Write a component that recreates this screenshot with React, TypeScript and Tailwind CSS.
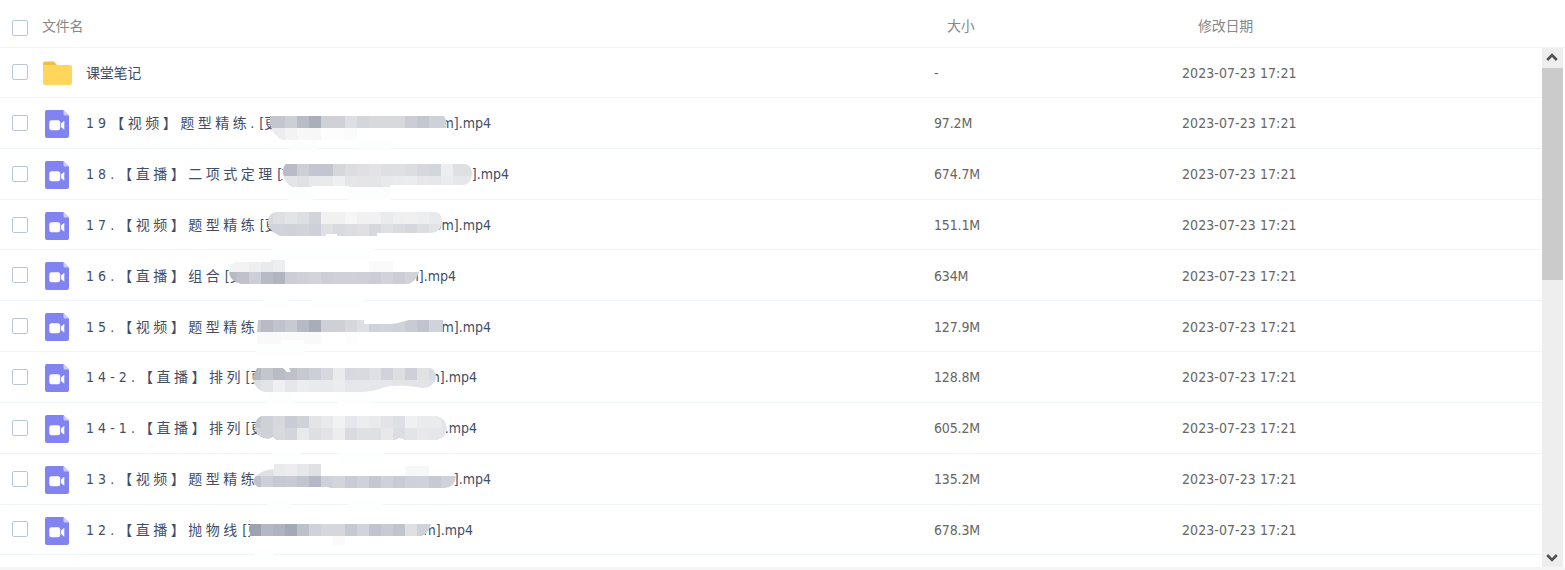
import React from 'react';

type Band = { x: number; y: number; colors: string };
type Mosaic = { clip: string; bands: Band[]; faint?: [number, number, number, number, string][] };
type FileRow = {
  index: string;
  name: string;
  extra: string;
  tail: string;
  width: string;
  size: string;
  top: number;
  height: string;
  textOffset?: string;
  boxOffset?: string;
  mosaic: Mosaic;
};

const DATE = '2023-07-23 17:21';

const files: FileRow[] = [
  {
    index: '19', name: '【视频】题型精练.', extra: '[更', tail: 'm].mp4', width: 'w-[405px]', size: '97.2M', top: 98, height: 'h-[51px]',
    mosaic: {
      clip: 'M270 116H444Q448 121 446 128H357V140H283Q273 136 270 124Z',
      bands: [
        { x: 261, y: 116, colors: 'c3c6cf c3c6cf cccfd6 b7bcc8 a9aebb d0d1d6 d0d1d6 dce0e4 d2d6dd d8d9dd d8d9dd d8d9dd cacdd4 c3c7d0 ced1d8 cfd2d9 ced1d8' },
        { x: 261, y: 128, colors: 'ececee ececee f3f3f4 f7f7f7 f7f7f7 fdfdfd fdfdfd fafbfb' },
      ],
      faint: [[292, 141, 25, 10, 'fcfdfd'], [359, 140, 32, 11, 'fcfdfd']],
    },
  },
  {
    index: '18.', name: '【直播】二项式定理', extra: '[', tail: '].mp4', width: 'w-[423px]', size: '674.7M', top: 149, height: 'h-[51px]',
    mosaic: {
      clip: 'M286 164H466Q472 166 472 174Q472 183 464 185H390V187H349V186H312V187H292Q283 182 283 172Q283 166 286 164Z',
      bands: [
        { x: 273, y: 164, colors: 'b8bcc7 b8bcc7 cccfd6 c3c6d0 c3c6d0 d6d7dc dddde1 e0dfe3 e3e2e6 dedfe3 dfe0e3 dbdde1 d5d8dd d3d6dc eeeef0 dfe0e4 dfe0e4' },
        { x: 273, y: 176, colors: 'e4e5e8 e4e5e8 e0e1e4 e8e9eb e9eaec eeeff0 e6e6e9 e5e5e8 e5e5e8 e8e9ea eaebed ebecee e8e8eb e6e7ea eaebed e6e7ea e6e7ea' },
      ],
      faint: [[288, 187, 25, 13, 'fcfdfd'], [347, 187, 44, 13, 'fcfdfd'], [281, 179, 2, 1, '8b93a3'], [282, 169, 1, 1, '8b93a3']],
    },
  },
  {
    index: '17.', name: '【视频】题型精练', extra: '[更', tail: 'om].mp4', width: 'w-[405px]', size: '151.1M', top: 200, height: 'h-[50px]',
    mosaic: {
      clip: 'M275 212H436Q442 213 442 221Q442 232 431 233H377V236H337V234H326V236H280Q268 231 268 222Q268 214 275 212Z',
      bands: [
        { x: 261, y: 212, colors: 'd8dae0 dddfe3 e3e4e7 dce0e4 d3d4da f1f1f2 f1f1f2 f5f6f8 f1f1f2 f1f1f3 eaebec eeeff0 f0f0f1 edeeef e9eaed e9eaed' },
        { x: 261, y: 224, colors: 'd0d3db d0d3da cfd2d9 d2d4da cdd0d8 dfe0e4 d8dadf dcdde1 e0e0e4 d6d8de dfe0e4 d9dbe0 d5d7dd dcdde1 e2e3e6 e2e3e6' },
      ],
      faint: [[272, 248, 102, 12, 'fdfefe']],
    },
  },
  {
    index: '16.', name: '【直播】组合', extra: '[更', tail: 'm].mp4', width: 'w-[370px]', size: '634M', top: 250, height: 'h-[51px]', textOffset: 'pt-0.5',
    mosaic: {
      clip: 'M237 262H271V260H285V272H419Q416 282 408 284H241Q229 281 229 271Q229 263 237 262Z',
      bands: [
        { x: 225, y: 260, colors: 'f3f3f4 f3f3f4 eeeff0 e9eaec edeef0' },
        { x: 225, y: 272, colors: 'b7bbc5 bfc2cb cccfd7 b7bbc6 b1b5c0 ccced5 cfd1d9 d2d4da cccfd6 cfd1d8 cfd1d8 cdd0d7 cacdd5 d0d3d9 cbced6 d0d3da d0d3da' },
      ],
      faint: [[369, 261, 24, 11, 'fafafa'], [263, 296, 26, 12, 'fdfefe'], [312, 296, 52, 12, 'fdfefe']],
    },
  },
  {
    index: '15.', name: '【视频】题型精练', extra: '', tail: 'm].mp4', width: 'w-[405px]', size: '127.9M', top: 301, height: 'h-[51px]', textOffset: 'pt-0.5',
    mosaic: {
      clip: 'M258 320H364V324H390Q400 323 409 320H443V332H257Z',
      bands: [
        { x: 249, y: 320, colors: 'c3c7d0 b8bbc5 bfc3cd c8cad1 b6bac5 a8adb9 ced0d7 ced0d7 d5d7dd dcdfe3 cfd2d9 d2d4da cfd2d9 c8cbd4 c0c4ce d0d3da ccced6' },
      ],
      faint: [[257, 332, 24, 12, 'f9f9fa'], [281, 332, 24, 8, 'fafafa'], [304, 332, 17, 12, 'f9f9fa'], [345, 332, 12, 12, 'fdfdfd'], [256, 344, 49, 12, 'fdfefe']],
    },
  },
  {
    index: '14-2.', name: '【直播】排列', extra: '[更', tail: 'm].mp4', width: 'w-[391px]', size: '128.8M', top: 352, height: 'h-[51px]',
    mosaic: {
      clip: 'M257 368H283L287 372H291L289 368H431Q436 370 436 378Q433 388 422 388Q396 383 382 388Q373 392 360 392H264Q253 388 253 376Z',
      bands: [
        { x: 249, y: 368, colors: 'b5b8c3 c3c6cf b9bcc7 bcc0ca c6c9d1 cdcfd6 d6d8dd eaebed d7d9df d8dae0 dfe0e4 d1d3db dcdee2 cdd0d8 e0e1e5 dadce1' },
        { x: 249, y: 380, colors: 'dcdee2 e3e4e7 efeff1 e6e7ea ecedef e9eaec e8e9eb ebecee e6e7ea e6e7ea e6e7ea e6e7ea e3e4e7 e3e4e7 e3e4e7 e0e1e5' },
      ],
      faint: [[268, 392, 25, 12, 'fdfefe'], [338, 392, 32, 12, 'fdfefe']],
    },
  },
  {
    index: '14-1.', name: '【直播】排列', extra: '[更', tail: '.mp4', width: 'w-[391px]', size: '605.2M', top: 403, height: 'h-[51px]',
    mosaic: {
      clip: 'M261 416H437Q447 419 447 429Q446 437 438 440H405Q402 438 399 438L395 440H276L273 437Q270 440 263 438Q255 435 255 426Q255 419 261 416Z',
      bands: [
        { x: 249, y: 416, colors: 'c5c8d0 cfd1d8 d7d8dd c9ccd7 d0d2d9 e4e4e8 e9eaec f1f2f3 e6e7ea ebedee e9eaec e4e4e8 dee0e4 f0f0f2 eaebed eaebed e4e5e8' },
        { x: 249, y: 428, colors: 'd2d4da cfd1d8 d7dadd d3d5db e9eaec dedfe3 e3e3e7 ededef d9dbe0 dfe0e4 dfe0e4 e8e8eb dcdde2 e3e4e7 e8e8eb e6e7ea e4e5e8' },
      ],
      faint: [[274, 451, 25, 12, 'fdfefe'], [339, 451, 43, 12, 'fdfefe']],
    },
  },
  {
    index: '13.', name: '【视频】题型精练', extra: '', tail: '].mp4', width: 'w-[405px]', size: '135.2M', top: 454, height: 'h-[51px]',
    mosaic: {
      clip: 'M274 464H321V476H456Q455 487 445 488H331L327 487H258Q250 482 256 476Q262 470 274 469Z',
      bands: [
        { x: 249, y: 464, colors: 'dfe0e4 dfe0e4 e9eaec ededef e5e7ea dfe1e4' },
        { x: 249, y: 476, colors: 'bfc2cb ced0d7 c5c9d1 c8cbd3 c1c6cd b4b9c5 ced1d8 d3d5da c9ccd4 d0d2d9 c4c8d1 cfd2d9 c7cbd4 cfd1d8 d0d2da c6cad3 d0d2d9 d0d2d9' },
      ],
      faint: [[405, 466, 24, 10, 'f6f7f7'], [267, 500, 24, 11, 'fdfefe'], [348, 500, 34, 11, 'fdfefe']],
    },
  },
  {
    index: '12.', name: '【直播】抛物线', extra: '[更', tail: 'm].mp4', width: 'w-[387px]', size: '678.3M', top: 505, height: 'h-[50px]', boxOffset: 'pb-0.5',
    mosaic: {
      clip: 'M250 524H431Q429 533 422 536H250Z',
      bands: [
        { x: 249, y: 524, colors: '9da2b0 b4b8c4 afb3c0 a4a9b8 bdc1cc ced2da d6d7dc d6d7dc c5c9d1 d1d4da bfc3cd c8cbd3 c0c5cc dfe0e4 cfd2d9 cfd2d9' },
      ],
      faint: [[250, 520, 14, 4, 'ffffff'], [250, 536, 14, 3, 'ffffff'], [333, 536, 12, 9, 'fafafa'], [254, 549, 20, 10, 'fdfefe']],
    },
  },
];

function Checkbox() {
  return <span className="block h-4 w-4 shrink-0 rounded-[2px] border border-[#b9c6d6] bg-white" />;
}

function FolderIcon() {
  return (
    <svg width="30" height="26" viewBox="0 0 30 26">
      <path d="M1 3Q1 1.500 3 1.500H12L14.500 4.500V9H1Z" fill="#eec04b" />
      <path d="M1 5H28Q30 5 30 7V23Q30 25 28 25H3Q1 25 1 23Z" fill="#ffd65c" />
    </svg>
  );
}

function VideoIcon() {
  return (
    <svg width="24" height="28" viewBox="0 0 24 28">
      <path d="M2 0H18.500L24 5.500V26Q24 28 22 28H2Q0 28 0 26V2Q0 0 2 0Z" fill="#8183f1" />
      <path d="M18.500 0L24 5.500H20Q18.500 5.500 18.500 4Z" fill="#cbccfb" />
      <rect x="4.300" y="10.300" width="10.900" height="9.900" rx="2.200" fill="#fff" />
      <path d="M19.300 10.800V19.700L16 17V13.500Z" fill="#fff" />
    </svg>
  );
}

function MosaicStrip({ mosaic, top }: { mosaic: Mosaic; top: number }) {
  const id = `strip-${top}`;
  return (
    <svg
      className="pointer-events-none absolute left-[220px] top-0 overflow-visible"
      width="300"
      height="51"
      viewBox={`220 ${top} 300 51`}
      aria-hidden="true"
    >
      <clipPath id={id}>
        <path d={mosaic.clip} />
      </clipPath>
      {mosaic.faint?.map(([x, y, w, h, c], i) => (
        <rect key={i} x={x} y={y} width={w} height={h} fill={`#${c}`} />
      ))}
      <g clipPath={`url(#${id})`} shapeRendering="crispEdges">
        {mosaic.bands.map((band) =>
          band.colors.split(' ').map((c, i) => (
            <rect key={`${band.y}-${i}`} x={band.x + i * 12} y={band.y} width="12" height="12" fill={`#${c}`} />
          )),
        )}
      </g>
    </svg>
  );
}

function Cells({ size, offset = '' }: { size: string; offset?: string }) {
  return (
    <>
      <div className={`w-[248px] shrink-0 tracking-[-0.15px] text-[#666] ${offset}`}>{size}</div>
      <div className={`tracking-[0.07px] text-[#666] ${offset}`}>{DATE}</div>
    </>
  );
}

export default function App() {
  return (
    <div className="flex h-[570px] w-[1565px] flex-col overflow-hidden bg-white font-['DejaVu_Sans_Condensed','Noto_Sans','Noto_Sans_CJK_SC',sans-serif] text-[14px] leading-[20px] text-[#424e67]">
      <header className="flex h-12 shrink-0 items-start border-b border-[#f2f4f6] pl-3 pt-4 tracking-[-0.25px] text-[#888]">
        <div className="pt-1">
          <Checkbox />
        </div>
        <div className="ml-[14px] w-[905px]">文件名</div>
        <div className="w-[251px]">大小</div>
        <div>修改日期</div>
      </header>
      <div className="flex h-[519px] shrink-0">
        <main className="w-[1542px] shrink-0 overflow-hidden">
          <div className="flex h-[50px] items-center border-b border-[#f2f6fa] pl-3">
            <div className="pb-0.5">
              <Checkbox />
            </div>
            <div className="ml-[14px] w-11 shrink-0">
              <FolderIcon />
            </div>
            <div className="w-[848px] shrink-0 tracking-[-0.25px]">课堂笔记</div>
            <Cells size="-" />
          </div>
          {files.map((file) => (
            <div key={file.index} className={`relative flex items-center border-b border-[#f0f5fb] pl-3 ${file.height}`}>
              <div className={file.boxOffset}>
                <Checkbox />
              </div>
              <div className="ml-[17px] w-[41px] shrink-0 pt-0.5">
                <VideoIcon />
              </div>
              <div className={`w-[848px] shrink-0 ${file.textOffset ?? ''}`}>
                <div className={`flex justify-between whitespace-nowrap ${file.width}`}>
                  <span>
                    <span className="tracking-[4.1px]">{file.index}</span>
                    <span className="tracking-[3.5px]">{file.name}</span>
                    <span className="ml-[1.5px]">{file.extra}</span>
                  </span>
                  <span>{file.tail}</span>
                </div>
              </div>
              <Cells size={file.size} offset={file.textOffset} />
              <MosaicStrip mosaic={file.mosaic} top={file.top} />
            </div>
          ))}
        </main>
        <div className="flex w-[21px] flex-col justify-between bg-[#eee]">
          <div>
            <div className="flex h-5 items-center justify-center pb-0.5 pr-px">
              <svg width="12" height="9" viewBox="0 0 12 9">
                <path d="M1.200 7L6 2.200L10.800 7" fill="none" stroke="#505050" strokeWidth="2.600" />
              </svg>
            </div>
            <div className="h-[212px] bg-[#cbcbcb]" />
          </div>
          <div className="flex h-5 items-center justify-center pr-px pt-px">
            <svg width="12" height="9" viewBox="0 0 12 9">
              <path d="M1.200 2L6 6.800L10.800 2" fill="none" stroke="#505050" strokeWidth="2.600" />
            </svg>
          </div>
        </div>
      </div>
      <footer className="h-[3px] bg-[#f5f5f5]" />
    </div>
  );
}
